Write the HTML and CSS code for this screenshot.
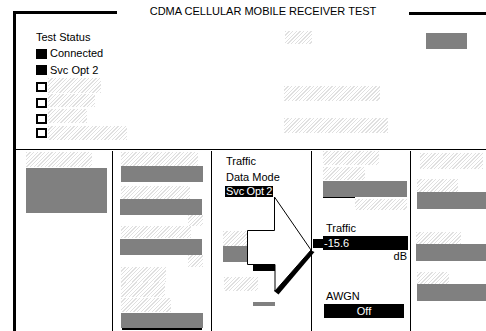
FILE: index.html
```html
<!DOCTYPE html>
<html>
<head>
<meta charset="utf-8">
<link rel="stylesheet" href="styles.css">
</head>
<body>
<div class="frame">
  <div class="header">
    <div class="rule rule-l"></div>
    <div class="title">CDMA CELLULAR MOBILE RECEIVER TEST</div>
    <div class="rule rule-r"></div>
  </div>
  <div class="top">
    <div class="status">
      <div class="st-head">Test Status</div>
      <div class="st-row r1"><span class="sq"></span><span class="st-text">Connected</span></div>
      <div class="st-row r2"><span class="sq"></span><span class="st-text">Svc Opt 2</span></div>
      <div class="st-row r3"><span class="box"></span><span class="hatch"></span></div>
      <div class="st-row r4"><span class="box"></span><span class="hatch"></span></div>
      <div class="st-row r5"><span class="box"></span><span class="hatch"></span></div>
      <div class="st-row r6"><span class="box"></span><span class="hatch"></span></div>
    </div>
    <div class="mid">
      <div class="hatch m1"></div>
      <div class="hatch m2"></div>
      <div class="hatch m3"></div>
    </div>
    <div class="right">
      <div class="gray rg"></div>
    </div>
  </div>
  <div class="bottom">
    <div class="col c1">
      <div class="hatch a1"></div>
      <div class="gray a2"></div>
    </div>
    <div class="col c2">
      <div class="hatch b1"></div>
      <div class="gray b2"></div>
      <div class="hatch b3"></div>
      <div class="gray b4"></div>
      <div class="hatch b5"></div>
      <div class="hatch b6"></div>
      <div class="gray b7"></div>
      <div class="hatch b8"></div>
      <div class="hatch b9"></div>
      <div class="hatch b10"></div>
      <div class="hatch b11"></div>
      <div class="gray b12"></div>
      <div class="b13"></div>
    </div>
    <div class="col c3">
      <div class="lbl l1">Traffic</div>
      <div class="lbl">Data Mode</div>
      <div class="inv svc">Svc Opt 2</div>
      <div class="hatch d1"></div>
      <div class="gray d2"></div>
      <div class="hatch d3"></div>
      <div class="gray d4"></div>
    </div>
    <div class="col c4">
      <div class="hatch e1"></div>
      <div class="hatch e2"></div>
      <div class="gray e3"></div>
      <div class="e4"></div>
      <div class="hatch e5"></div>
      <div class="lbl e6">Traffic</div>
      <div class="valrow">
        <span class="marker"></span>
        <span class="inv val">-15.6</span>
      </div>
      <div class="unit">dB</div>
      <div class="lbl e7">AWGN</div>
      <div class="inv off">Off</div>
    </div>
    <div class="col c5">
      <div class="hatch f1"></div>
      <div class="hatch f2"></div>
      <div class="gray f3"></div>
      <div class="hatch f4"></div>
      <div class="gray f5"></div>
      <div class="hatch f6"></div>
      <div class="gray f7"></div>
    </div>
  </div>
</div>
<svg class="arrow" width="486" height="331" viewBox="0 0 486 331">
  <rect x="253" y="264" width="22" height="7" fill="#000"/>
  <polygon points="310,250 314.5,252 278.5,294.5 274,291" fill="#000"/>
  <path d="M247.5 230.5 H274.5 V197 L311 250 L275 291 V264.5 H247.5 Z" fill="#fff" stroke="#000" stroke-width="1"/>
</svg>
</body>
</html>
```

FILE: styles.css
```css
* { box-sizing: border-box; margin: 0; padding: 0; }
html, body { width: 486px; height: 331px; overflow: hidden; background: #fff; }
body {
  font-family: "Liberation Sans", Arial, sans-serif;
  font-size: 11px;
  color: #000;
  position: relative;
}

.hatch { display: block; background: repeating-linear-gradient(135deg, #e0e0e0 0 1px, #fff 1px 2.6px); }
.gray { display: block; background: #808080; }

.frame {
  margin: 11px 0 0 13px;
  border-left: 3px solid #000;
  height: 320px;
  display: flex;
  flex-direction: column;
}

/* header */
.header { display: flex; height: 3px; align-items: flex-start; }
.rule { height: 3px; background: #000; flex: none; }
.rule-l { width: 101px; }
.rule-r { width: 77px; margin-top: 1px; }
.title {
  flex: 1;
  text-align: center;
  line-height: 14px;
  height: 14px;
  margin-top: -7px;
  white-space: nowrap;
}

/* top section */
.top { height: 136px; border-bottom: 1px solid #000; display: flex; flex: none; }
.status { width: 268px; padding-left: 20px; flex: none; }
.st-head { margin-top: 15px; line-height: 16px; height: 16px; }
.st-row { display: flex; align-items: flex-start; }
.st-row.r1 { height: 17px; line-height: 17px; }
.st-row.r2 { height: 16px; line-height: 16px; }
.st-row.r3 { height: 16px; }
.st-row.r4 { height: 15px; }
.st-row.r5 { height: 17px; }
.st-row.r6 { height: 14px; }
.sq { width: 11px; height: 10px; background: #000; margin-right: 3px; flex: none; }
.r1 .sq { margin-top: 4px; }
.r2 .sq { margin-top: 3px; }
.box { width: 11px; height: 10px; border: 2px solid #000; margin-top: 4px; margin-right: 1px; flex: none; }
.r5 .box { margin-top: 5px; }
.r6 .box { margin-top: 2px; }
.r3 .hatch { width: 53px; height: 15px; }
.r4 .hatch { width: 47px; height: 13px; }
.r5 .hatch { width: 39px; height: 14px; }
.r6 .hatch { width: 79px; height: 14px; }

.mid { width: 142px; flex: none; }
.m1 { margin: 17px 0 0 1px; width: 27px; height: 13px; }
.m2 { margin-top: 42px; width: 96px; height: 15px; }
.m3 { margin-top: 17px; width: 104px; height: 15px; }
.right { flex: none; }
.rg { margin-top: 19px; width: 41px; height: 16px; }

/* bottom section */
.bottom { display: flex; flex: 1; }
.col { margin-top: 1px; border-right: 1px solid #000; display: flex; flex-direction: column; align-items: flex-start; flex: none; }
.c1 { width: 97px; padding-left: 10px; }
.c2 { width: 99px; padding-left: 8px; }
.c3 { width: 100px; padding-left: 14px; }
.c4 { width: 99px; padding-left: 11px; }
.c5 { flex: 1; border-right: none; padding-left: 5px; }

.a1 { margin-top: 1px; width: 66px; height: 15px; }
.a2 { margin-top: 1px; width: 81px; height: 45px; }

.b1 { margin-top: 1px; width: 77px; height: 14px; }
.b2 { width: 82px; height: 16px; }
.b3 { margin-top: 4px; width: 69px; height: 13px; }
.b4 { margin-left: -1px; width: 82px; height: 16px; }
.b5 { margin-left: 67px; width: 15px; height: 11px; }
.b6 { width: 70px; height: 12px; }
.b7 { margin: 1px 0 0 -1px; width: 82px; height: 16px; }
.b8 { margin-left: 67px; width: 15px; height: 12px; }
.b9 { width: 45px; height: 15px; }
.b10 { width: 44px; height: 15px; }
.b11 { margin-top: 1px; width: 50px; height: 14px; }
.b12 { margin-top: 1px; width: 82px; height: 15px; }
.b13 { margin-left: 1px; width: 80px; height: 2px; background: #000; }

.lbl { line-height: 16px; height: 16px; white-space: nowrap; }
.l1 { margin-top: 2px; }
.inv { background: #000; color: #fff; white-space: nowrap; }
.svc { margin: 1px 0 0 -1px; height: 11px; line-height: 11px; padding: 0 1px; word-spacing: -1px; }
.d1 { margin: 34px 0 0 -3px; width: 40px; height: 15px; }
.d2 { margin-left: -3px; width: 40px; height: 16px; }
.d3 { margin: 15px 0 0 -2px; width: 34px; height: 14px; }
.d4 { margin: 11px 0 0 27px; width: 22px; height: 4px; }

.e1 { width: 56px; height: 14px; }
.e2 { margin-top: 2px; width: 42px; height: 13px; }
.e3 { margin-top: 1px; width: 84px; height: 16px; }
.e4 { width: 32px; height: 1px; background: #000; }
.e5 { margin: 1px 0 0 32px; width: 52px; height: 11px; }
.e6 { margin: 10px 0 0 3px; }
.valrow { display: flex; align-items: flex-start; height: 14px; margin-left: -10px; }
.marker { width: 10px; height: 9px; background: #000; margin-top: 3px; flex: none; }
.val { width: 85px; height: 14px; line-height: 14px; padding-left: 1px; }
.unit { align-self: stretch; text-align: right; padding-right: 3px; height: 12px; line-height: 12px; }
.e7 { margin: 26px 0 0 3px; }
.off { margin-left: 1px; width: 80px; height: 14px; line-height: 14px; text-align: center; }

.f1 { margin: 2px 0 0 4px; width: 63px; height: 16px; }
.f2 { margin: 10px 0 0 1px; width: 41px; height: 13px; }
.f3 { margin-left: 1px; width: 69px; height: 17px; }
.f4 { margin-top: 23px; width: 45px; height: 12px; }
.f5 { width: 70px; height: 17px; }
.f6 { margin: 11px 0 0 1px; width: 32px; height: 12px; }
.f7 { margin-left: 1px; width: 69px; height: 17px; }

.arrow { position: absolute; left: 0; top: 0; pointer-events: none; }
```
